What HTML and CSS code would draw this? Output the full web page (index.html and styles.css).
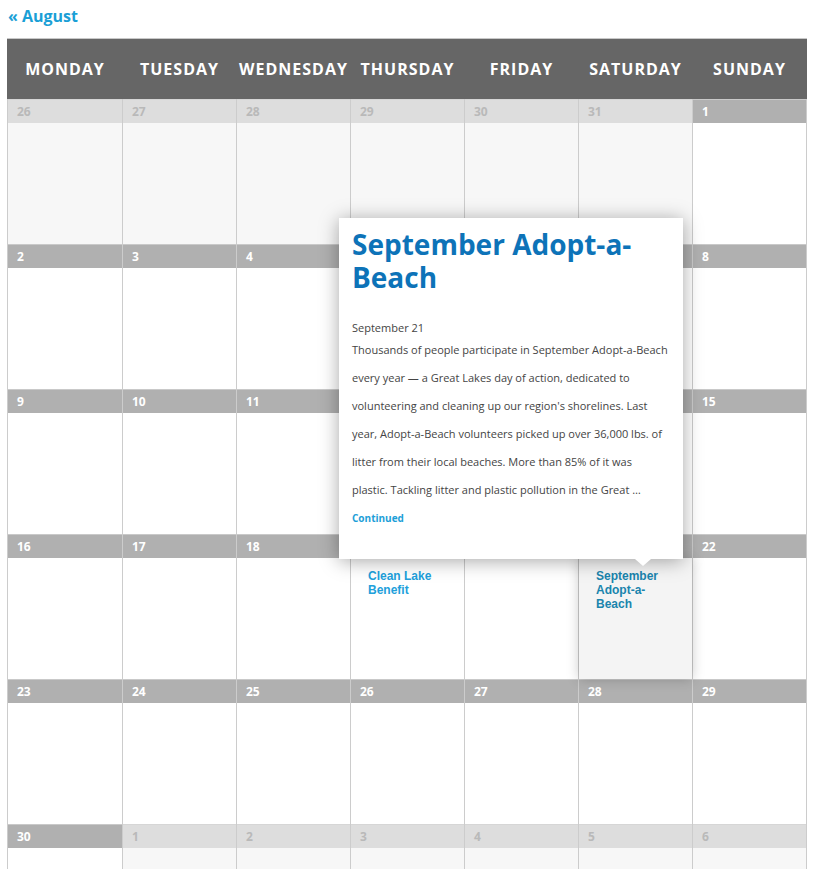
FILE: index.html
```html
<!DOCTYPE html>
<html lang="en">
<head>
<meta charset="utf-8">
<title>Calendar - September</title>
<link rel="stylesheet" href="styles.css">
</head>
<body>
<div class="page">
  <div class="nav"><a class="prev" href="#">« August</a></div>
  <div class="calendar">
    <div class="head">
      <div class="hcell">Monday</div>
      <div class="hcell">Tuesday</div>
      <div class="hcell">Wednesday</div>
      <div class="hcell">Thursday</div>
      <div class="hcell">Friday</div>
      <div class="hcell">Saturday</div>
      <div class="hcell">Sunday</div>
    </div>
    <div class="grid">
      <div class="cell other"><div class="num">26</div><div class="body"></div></div>
      <div class="cell other"><div class="num">27</div><div class="body"></div></div>
      <div class="cell other"><div class="num">28</div><div class="body"></div></div>
      <div class="cell other"><div class="num">29</div><div class="body"></div></div>
      <div class="cell other"><div class="num">30</div><div class="body"></div></div>
      <div class="cell other"><div class="num">31</div><div class="body"></div></div>
      <div class="cell"><div class="num">1</div><div class="body"></div></div>

      <div class="cell"><div class="num">2</div><div class="body"></div></div>
      <div class="cell"><div class="num">3</div><div class="body"></div></div>
      <div class="cell"><div class="num">4</div><div class="body"></div></div>
      <div class="cell"><div class="num">5</div><div class="body"></div></div>
      <div class="cell"><div class="num">6</div><div class="body"></div></div>
      <div class="cell"><div class="num">7</div><div class="body"></div></div>
      <div class="cell"><div class="num">8</div><div class="body"></div></div>

      <div class="cell"><div class="num">9</div><div class="body"></div></div>
      <div class="cell"><div class="num">10</div><div class="body"></div></div>
      <div class="cell"><div class="num">11</div><div class="body"></div></div>
      <div class="cell"><div class="num">12</div><div class="body"></div></div>
      <div class="cell"><div class="num">13</div><div class="body"></div></div>
      <div class="cell"><div class="num">14</div><div class="body"></div></div>
      <div class="cell"><div class="num">15</div><div class="body"></div></div>

      <div class="cell"><div class="num">16</div><div class="body"></div></div>
      <div class="cell"><div class="num">17</div><div class="body"></div></div>
      <div class="cell"><div class="num">18</div><div class="body"></div></div>
      <div class="cell"><div class="num">19</div><div class="body"><a class="event" href="#">Clean Lake Benefit</a></div></div>
      <div class="cell"><div class="num">20</div><div class="body"></div></div>
      <div class="cell active"><div class="num">21</div><div class="body"><a class="event hover" href="#">September Adopt-a-Beach</a></div></div>
      <div class="cell"><div class="num">22</div><div class="body"></div></div>

      <div class="cell"><div class="num">23</div><div class="body"></div></div>
      <div class="cell"><div class="num">24</div><div class="body"></div></div>
      <div class="cell"><div class="num">25</div><div class="body"></div></div>
      <div class="cell"><div class="num">26</div><div class="body"></div></div>
      <div class="cell"><div class="num">27</div><div class="body"></div></div>
      <div class="cell"><div class="num">28</div><div class="body"></div></div>
      <div class="cell"><div class="num">29</div><div class="body"></div></div>

      <div class="cell"><div class="num">30</div><div class="body"></div></div>
      <div class="cell other"><div class="num">1</div><div class="body"></div></div>
      <div class="cell other"><div class="num">2</div><div class="body"></div></div>
      <div class="cell other"><div class="num">3</div><div class="body"></div></div>
      <div class="cell other"><div class="num">4</div><div class="body"></div></div>
      <div class="cell other"><div class="num">5</div><div class="body"></div></div>
      <div class="cell other"><div class="num">6</div><div class="body"></div></div>
    </div>

    <div class="tooltip">
      <h3 class="tt-title">September Adopt-a-Beach</h3>
      <div class="tt-date">September 21</div>
      <p class="tt-text">Thousands of people participate in September Adopt-a-Beach every year — a Great Lakes day of action, dedicated to volunteering and cleaning up our region's shorelines. Last year, Adopt-a-Beach volunteers picked up over 36,000 lbs. of litter from their local beaches. More than 85% of it was plastic. Tackling litter and plastic pollution in the Great …</p>
      <a class="tt-more" href="#">Continued</a>
      <span class="tt-tail"></span>
    </div>
  </div>
</div>
</body>
</html>
```

FILE: styles.css
```css
html, body {
  margin: 0;
  padding: 0;
  background: #fff;
}
body {
  font-family: "Open Sans", "Noto Sans", sans-serif;
  color: #444;
  height: 869px;
  overflow: hidden;
}
.page {
  padding: 5px 0 0 7px;
}
.nav {
  height: 22px;
  margin-bottom: 11px;
  padding-left: 1px;
}
.prev {
  font-weight: 700;
  font-size: 16px;
  line-height: 22px;
  color: #1a9fd6;
  text-decoration: none;
}
.calendar {
  position: relative;
  width: 800px;
}
.head {
  display: grid;
  grid-template-columns: 115px repeat(6, 114px);
  background: #666;
  border-top: 1px solid #c8c8c8;
  height: 60px;
  padding-right: 1px;
}
.hcell {
  display: flex;
  align-items: center;
  justify-content: center;
  color: #fff;
  font-weight: 700;
  font-size: 16px;
  letter-spacing: 1px;
  text-transform: uppercase;
  padding-left: 1px;
}
.grid {
  display: grid;
  grid-template-columns: 115px repeat(6, 114px);
  border-right: 1px solid #ccc;
}
.cell {
  border-left: 1px solid #ccc;
  position: relative;
}
.num {
  height: 23px;
  border-top: 1px solid #c9c9c9;
  background: #b0b0b0;
  color: #fff;
  font-weight: 700;
  font-size: 12px;
  line-height: 23px;
  padding-left: 9px;
}
.body {
  height: 121px;
  background: #fff;
}
.other .num {
  background: #dddddd;
  border-top-color: #d6d6d6;
  color: #b9b9b9;
}
.other .body {
  background: #f7f7f7;
}
.active .body {
  background: #f4f4f4;
  box-shadow: 0 0 12px rgba(0, 0, 0, 0.22);
  position: relative;
  z-index: 1;
}
.event {
  display: block;
  padding: 11px 16px 0 17px;
  font-family: "Liberation Sans", Arial, sans-serif;
  font-weight: 700;
  font-size: 12px;
  line-height: 14px;
  color: #21a0db;
  text-decoration: none;
}
.event.hover {
  color: #1a84ad;
}
.tooltip {
  position: absolute;
  left: 332px;
  top: 180px;
  width: 318px;
  height: 331px;
  padding: 10px 13px 0 13px;
  background: #fff;
  box-shadow: 0 2px 18px rgba(0, 0, 0, 0.35);
  z-index: 5;
}
.tt-title {
  margin: 0;
  font-weight: 700;
  font-size: 28px;
  line-height: 33px;
  color: #0d73b8;
}
.tt-date {
  margin-top: 26px;
  font-size: 11px;
  line-height: 16px;
  color: #444;
}
.tt-text {
  margin: 0;
  font-size: 11px;
  line-height: 28px;
  color: #444;
}
.tt-more {
  display: block;
  margin-top: 6px;
  font-weight: 700;
  font-size: 10px;
  line-height: 16px;
  color: #1da0d8;
  text-decoration: none;
}
.tt-tail {
  position: absolute;
  left: 296px;
  bottom: -7px;
  width: 0;
  height: 0;
  border-left: 8px solid transparent;
  border-right: 8px solid transparent;
  border-top: 7px solid #fff;
}
```
